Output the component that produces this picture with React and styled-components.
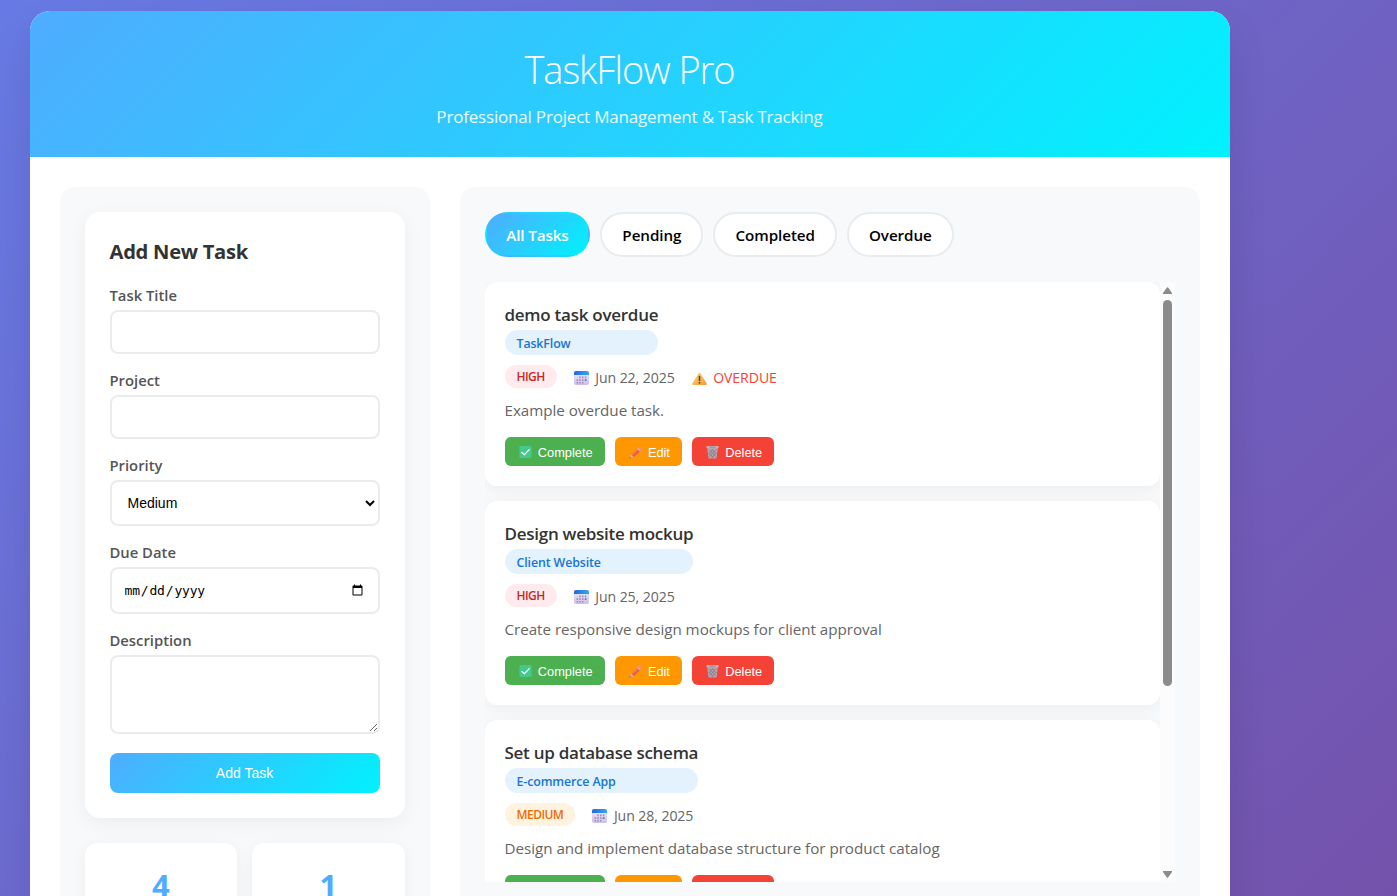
import React from "react";
import styled, { createGlobalStyle } from "styled-components";

const accent = "linear-gradient(135deg, #4facfe 0%, #00f2fe 100%)";

const GlobalStyle = createGlobalStyle`
  * { box-sizing: border-box; margin: 0; padding: 0; }
  html, body { height: 100%; overflow: hidden; }
  body { font-family: "Open Sans", "Noto Sans", sans-serif; color: #333; }
`;

const Page = styled.div`
  height: 896px;
  padding: 11px 0 0 29.5px;
  overflow: hidden;
  background: linear-gradient(135deg, #667eea 0%, #764ba2 100%) 0 -220px / 100% 1500px no-repeat;
`;

const Container = styled.div`
  width: 1200px;
  height: 1150px;
  overflow: hidden;
  background: #fff;
  border-radius: 20px;
  box-shadow: 0 20px 40px rgba(0, 0, 0, 0.1);
`;

const Header = styled.header`
  height: 146px;
  padding-top: 32px;
  text-align: center;
  color: #fff;
  background: ${accent};
`;

const AppTitle = styled.h1`
  font-size: 38px;
  font-weight: 300;
  line-height: 53px;
  letter-spacing: -1.05px;
  margin-bottom: 9px;
`;

const Subtitle = styled.p`
  font-size: 17px;
  line-height: 23px;
  letter-spacing: -0.19px;
  opacity: 0.9;
`;

const Columns = styled.div`
  display: grid;
  grid-template-columns: 370px 740px;
  gap: 30px;
  padding: 30px;
`;

const Panel = styled.section`
  height: 940px;
  padding: 25px;
  background: #f8f9fb;
  border-radius: 15px;
`;

const FormCard = styled.form`
  height: 606px;
  padding: 25px;
  margin-bottom: 25px;
  background: #fff;
  border-radius: 15px;
  box-shadow: 0 5px 20px rgba(0, 0, 0, 0.05);
`;

const FormTitle = styled.h2`
  font-size: 20.2px;
  font-weight: 700;
  line-height: 28px;
  letter-spacing: -0.3px;
  margin-bottom: 20px;
`;

const Field = styled.div`
  display: flex;
  flex-direction: column;
  height: ${(p) => p.$height}px;
`;

const Label = styled.label`
  font-size: 14.8px;
  font-weight: 600;
  line-height: 20px;
  margin-bottom: 5px;
  color: #555;
`;

const control = `
  width: 100%;
  padding: 12px;
  border: 2px solid #e9ecef;
  border-radius: 8px;
  background: #fff;
  color: #000;
  font-family: "Liberation Sans", Arial, sans-serif;
  font-size: 14px;
`;
const TextInput = styled.input`${control} height: 44px;`;
const DateInput = styled.input`${control} height: 47px; font-family: monospace; font-size: 13px; letter-spacing: -0.18px;`;
const Select = styled.select`${control} height: 46px;`;
const TextArea = styled.textarea`${control} height: 79px; resize: vertical;`;

const SubmitButton = styled.button`
  display: block;
  width: 100%;
  height: 40px;
  border: 0;
  border-radius: 8px;
  color: #fff;
  font: 14px "Liberation Sans", Arial, sans-serif;
  background: ${accent};
`;

const Stats = styled.div`
  display: grid;
  grid-template-columns: 1fr 1fr;
  gap: 15px;
`;

const StatCard = styled.div`
  height: 110px;
  padding-top: 20px;
  text-align: center;
  background: #fff;
  border-radius: 12px;
  box-shadow: 0 3px 15px rgba(0, 0, 0, 0.05);
`;

const StatNumber = styled.div`
  font-size: 31px;
  font-weight: 700;
  line-height: 45px;
  color: #4facfe;
`;

const Filters = styled.nav`
  display: flex;
  gap: 10px;
  margin-bottom: 25px;
`;

const FilterButton = styled.button`
  height: 45px;
  padding: 1px ${(p) => (p.$active ? 19.8 : 20)}px 0;
  border: 2px solid ${(p) => (p.$active ? "transparent" : "#e9ecef")};
  border-radius: 25px;
  font-family: inherit;
  font-size: 15.2px;
  font-weight: 600;
  letter-spacing: ${(p) => (p.$active ? -0.12 : -0.06)}px;
  color: ${(p) => (p.$active ? "#fff" : "#000")};
  background: ${(p) => (p.$active ? accent : "#fff")};
`;

const ListFrame = styled.div`
  display: flex;
  height: 600px;
  overflow: hidden;
`;

const TaskList = styled.div`
  width: 675px;
  height: 600px;
  overflow: hidden;
`;

const ScrollTrack = styled.div`
  display: flex;
  flex-direction: column;
  align-items: center;
  width: 15px;
  height: 600px;
  padding: 5px 0 4px;
  background: #fcfcfc;
`;

const Thumb = styled.div`
  width: 9px;
  height: 386px;
  margin: 6px 0 auto;
  border-radius: 5px;
  background: #8b8b8b;
`;

const TaskCard = styled.article`
  height: 204px;
  padding: 20px;
  margin-bottom: 15px;
  background: #fff;
  border-radius: 12px;
  box-shadow: 0 3px 15px rgba(0, 0, 0, 0.05);
`;

const TaskHeading = styled.div`
  display: inline-grid;
  vertical-align: top;
`;

const TaskTitle = styled.h3`
  font-size: 17px;
  font-weight: 600;
  line-height: 26px;
  letter-spacing: -0.26px;
  margin-bottom: 2px;
  color: #333;
`;

const ProjectTag = styled.span`
  height: 25px;
  padding: 0 12px;
  border-radius: 15px;
  font-size: 12.4px;
  font-weight: 600;
  line-height: 27px;
  letter-spacing: -0.12px;
  color: #1976d2;
  background: #e3f2fd;
`;

const Meta = styled.div`
  display: flex;
  gap: 15px;
  height: 23px;
  margin-top: 10px;
`;

const priorities = {
  HIGH: { text: "#c62828", fill: "#ffebee" },
  MEDIUM: { text: "#ef6c00", fill: "#fff3e0" },
};

const PriorityBadge = styled.span`
  height: 23px;
  padding: 0 12px;
  border-radius: 15px;
  font-size: 12px;
  font-weight: 600;
  line-height: 23px;
  letter-spacing: -0.55px;
  color: ${(p) => priorities[p.$level].text};
  background: ${(p) => priorities[p.$level].fill};
`;

const MetaItem = styled.span`
  display: flex;
  align-items: center;
  gap: 4.5px;
  padding-top: 3px;
  font-size: 14.1px;
  line-height: 20px;
  letter-spacing: -0.08px;
  color: ${(p) => (p.$alert ? "#f44336" : "#666")};
`;

const Description = styled.p`
  height: 22px;
  margin: 12px 0 15px;
  font-size: 15.2px;
  line-height: 21px;
  letter-spacing: -0.03px;
  color: #666;
`;

const Actions = styled.div`
  display: flex;
  gap: 10px;
`;

const ActionButton = styled.button`
  display: flex;
  align-items: center;
  gap: 4.3px;
  height: 29px;
  padding: 1px 12px 0;
  border: 0;
  border-radius: 6px;
  color: #fff;
  font: 12.8px "Liberation Sans", Arial, sans-serif;
  background: ${(p) => p.$fill};
`;

const CalendarIcon = () => (
  <svg width="19" height="16" viewBox="0 0 19 16">
    <defs>
      <linearGradient id="calTop" x1="0" x2="1"><stop stopColor="#2467df" /><stop offset="1" stopColor="#35a8f5" /></linearGradient>
      <linearGradient id="calBody" x1="0" x2="0" y1="0" y2="1"><stop stopColor="#f0ecfa" /><stop offset="1" stopColor="#d0bce9" /></linearGradient>
    </defs>
    <rect x="2" y="1" width="15" height="14" rx="2" fill="url(#calBody)" />
    <path d="M2 5V3a2 2 0 0 1 2-2h11a2 2 0 0 1 2 2v2z" fill="url(#calTop)" />
    <path d="M7.2 6.5h1.5v1.7H7.2zM10 6.5h1.5v1.7H10zM12.8 6.5h1.5v1.7h-1.5zM4.6 9.2h1.5v1.7H4.6zM7.2 9.2h1.5v1.7H7.2zM10 9.2h1.5v1.7H10zM4.6 11.9h1.5v1.5H4.6zM7.2 11.9h1.5v1.5H7.2zM10 11.9h1.5v1.5H10z" fill="#9a90b4" />
    <path d="M12.8 9.2h1.7v1.8h-1.7z" fill="#2b86ee" />
  </svg>
);

const WarningIcon = () => (
  <svg width="19" height="16" viewBox="0 0 19 16">
    <defs><linearGradient id="warn" x1="0" x2="1" y1="0" y2="1"><stop stopColor="#ffd368" /><stop offset="1" stopColor="#f59a3c" /></linearGradient></defs>
    <path d="M8.7 3.2q.8-1.2 1.6 0l6.4 10.2q.6 1.4-.8 1.6H3.1q-1.4-.2-.8-1.6z" fill="url(#warn)" />
    <path d="M9.5 6.6v3.8" stroke="#444" strokeWidth="1.5" strokeLinecap="round" />
    <circle cx="9.5" cy="12.8" r=".9" fill="#444" />
  </svg>
);

const CheckIcon = () => (
  <svg width="17" height="14" viewBox="0 0 17 14">
    <rect x="2.3" y="1" width="12.4" height="12" rx="1" fill="#42c98b" />
    <path d="M4.8 7.4l2.5 2.4 5-5.2" fill="none" stroke="#fff" strokeWidth="1.3" strokeLinecap="round" strokeLinejoin="round" />
  </svg>
);

const PencilIcon = () => (
  <svg width="17" height="14" viewBox="0 0 17 14">
    <path d="M2.4 13.4l1.5-4.2 2.9 2.8z" fill="#e3b58c" />
    <path d="M2.4 13.4l.6-1.7 1.1 1.1z" fill="#6b5460" />
    <path d="M3.9 9.2L10.7 3l2.9 2.8-6.8 6.2z" fill="#fb7a4e" />
    <path d="M5.3 10.5L12.1 4.3l1.5 1.5-6.8 6.2z" fill="#ee5a3c" />
    <path d="M9.9 3.7l1.1-1 2.9 2.8-1.1 1z" fill="#c9b6bd" />
    <path d="M11 2.7l.9-.9q1-.8 2 .1t.7 2.4l-.7 1.2z" fill="#f58c74" />
  </svg>
);

const TrashIcon = () => (
  <svg width="17" height="14" viewBox="0 0 17 14">
    <path d="M3.2 2.6h10.6l-1.1 10q-.1.9-1 .9H5.3q-.9 0-1-.9z" fill="#b5a4b0" />
    <path d="M5 4.6l6.6 7M8 4.3l4.2 4.4M4.8 8l4.4 4.8M12 4.6l-6.6 7M9 4.3L4.8 8.7M12.2 8l-4.4 4.8" stroke="#87707f" strokeWidth=".75" />
    <rect x="2.3" y="1" width="12.4" height="2.2" rx="1" fill="#bfb0bb" />
    <path d="M5.5 2.1h6" stroke="#87707f" strokeWidth=".7" />
  </svg>
);

const ScrollArrow = ({ down }) => (
  <svg width="9" height="7" viewBox="0 0 9 7">
    <path d={down ? "M0 0h9v1L5.3 6.3q-.8 1-1.6 0L0 1z" : "M0 7h9V6L5.3.7q-.8-1-1.6 0L0 6z"} fill="#8b8b8b" />
  </svg>
);

const tasks = [
  { title: "demo task overdue", project: "TaskFlow", priority: "HIGH", due: "Jun 22, 2025", overdue: true, text: "Example overdue task." },
  { title: "Design website mockup", project: "Client Website", priority: "HIGH", due: "Jun 25, 2025", text: "Create responsive design mockups for client approval" },
  { title: "Set up database schema", project: "E-commerce App", priority: "MEDIUM", due: "Jun 28, 2025", text: "Design and implement database structure for product catalog" },
];

const Task = ({ task }) => (
  <TaskCard>
    <TaskHeading>
      <TaskTitle>{task.title}</TaskTitle>
      <ProjectTag>{task.project}</ProjectTag>
    </TaskHeading>
    <Meta>
      <PriorityBadge $level={task.priority}>{task.priority}</PriorityBadge>
      <MetaItem><CalendarIcon />{task.due}</MetaItem>
      {task.overdue && <MetaItem $alert><WarningIcon />OVERDUE</MetaItem>}
    </Meta>
    <Description>{task.text}</Description>
    <Actions>
      <ActionButton $fill="#4caf50"><CheckIcon />Complete</ActionButton>
      <ActionButton $fill="#ff9800"><PencilIcon />Edit</ActionButton>
      <ActionButton $fill="#f44336"><TrashIcon />Delete</ActionButton>
    </Actions>
  </TaskCard>
);

export default function App() {
  return (
    <Page>
      <GlobalStyle />
      <Container>
        <Header>
          <AppTitle>TaskFlow Pro</AppTitle>
          <Subtitle>Professional Project Management &amp; Task Tracking</Subtitle>
        </Header>
        <Columns>
          <Panel>
            <FormCard>
              <FormTitle>Add New Task</FormTitle>
              <Field $height={85}><Label>Task Title</Label><TextInput type="text" /></Field>
              <Field $height={85}><Label>Project</Label><TextInput type="text" /></Field>
              <Field $height={87}>
                <Label>Priority</Label>
                <Select defaultValue="Medium"><option>Low</option><option>Medium</option><option>High</option></Select>
              </Field>
              <Field $height={88}><Label>Due Date</Label><DateInput type="date" /></Field>
              <Field $height={123}><Label>Description</Label><TextArea /></Field>
              <SubmitButton type="button">Add Task</SubmitButton>
            </FormCard>
            <Stats>
              <StatCard><StatNumber>4</StatNumber></StatCard>
              <StatCard><StatNumber>1</StatNumber></StatCard>
            </Stats>
          </Panel>
          <Panel>
            <Filters>
              <FilterButton $active>All Tasks</FilterButton>
              <FilterButton>Pending</FilterButton>
              <FilterButton>Completed</FilterButton>
              <FilterButton>Overdue</FilterButton>
            </Filters>
            <ListFrame>
              <TaskList>{tasks.map((t) => <Task key={t.title} task={t} />)}</TaskList>
              <ScrollTrack><ScrollArrow /><Thumb /><ScrollArrow down /></ScrollTrack>
            </ListFrame>
          </Panel>
        </Columns>
      </Container>
    </Page>
  );
}
